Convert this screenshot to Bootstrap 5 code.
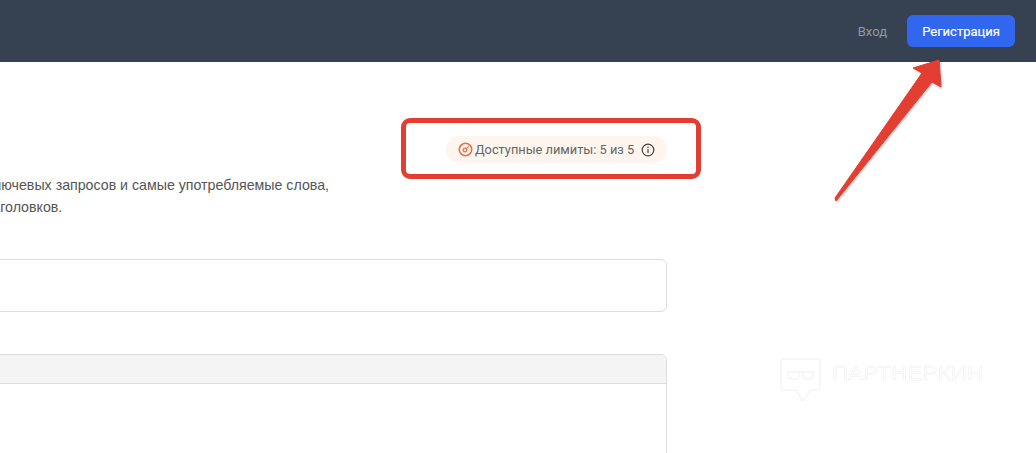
<!DOCTYPE html>
<html lang="ru">
<head>
    <meta charset="UTF-8">
    <meta name="viewport" content="width=device-width, initial-scale=1.0">
    <title>Регистрация</title>
    <link href="https://cdn.jsdelivr.net/npm/bootstrap@5.3.0/dist/css/bootstrap.min.css" rel="stylesheet">
    <style>
        html, body {
            height: 453px;
            overflow: hidden;
        }

        body {
            background: #fff;
            font-family: "Liberation Sans", Arial, sans-serif;
            position: relative;
        }

        .top-bar {
            background: #364251;
            height: 62px;
            padding-right: 21px;
        }

        .login-link {
            color: #9299a3;
            font: 13px Roboto, sans-serif;
            text-decoration: none;
        }

        .signup-btn {
            -webkit-text-stroke: .2px #fff;
            background: #3166ee;
            border: 0;
            border-radius: 6px;
            color: #fff;
            font: 13px Roboto, sans-serif;
            height: 32px;
            width: 108px;
            padding: 0;
        }

        .page-col {
            height: 391px;
            margin-left: -370px;
            overflow: hidden;
            padding-top: 74px;
            width: 1037px;
        }

        .limit-pill {
            align-items: center;
            background: #fef5ee;
            border-radius: 14px;
            color: #666;
            display: flex;
            font: 12.8px Roboto, sans-serif;
            height: 27px;
            padding: 0 12px;
            white-space: nowrap;
            width: 221px;
        }

        .pill-gauge {
            margin-right: 2px;
        }

        .pill-info {
            margin-left: 7px;
        }

        .intro-text {
            color: #555;
            font-size: 14.2px;
            line-height: 22px;
            margin: 11px 0 0;
            white-space: nowrap;
        }

        .url-box {
            border: 1px solid #dcdcdc;
            border-radius: 6px;
            height: 53px;
            margin-top: 41px;
        }

        .text-box {
            border: 1px solid #dcdcdc;
            border-radius: 6px 6px 0 0;
            height: 200px;
            margin-top: 42px;
        }

        .text-box-head {
            background: #f4f4f4;
            border-bottom: 1px solid #dcdcdc;
            border-radius: 6px 6px 0 0;
            height: 29px;
        }

        .note-frame {
            border: 5px solid #e23e32;
            border-radius: 9px;
            height: 61px;
            left: 401px;
            position: absolute;
            top: 118px;
            width: 300px;
        }

        .note-arrow {
            filter: drop-shadow(1px 1px 1px rgba(0, 0, 0, .25));
            left: 830px;
            position: absolute;
            top: 55px;
        }

        .wm-logo {
            align-items: center;
            display: flex;
            gap: 10px;
            left: 780px;
            position: absolute;
            top: 358px;
        }

        .wm-text {
            -webkit-text-stroke: .5px #eee;
            color: #fff;
            font: 20px "Liberation Sans", sans-serif;
            margin-top: -15px;
            transform: scaleX(1.13);
            transform-origin: left center;
        }
    </style>
</head>
<body>
<nav class="top-bar d-flex align-items-center justify-content-end">
    <a class="login-link me-3 pe-1" href="#">Вход</a>
    <button class="signup-btn" type="button">Регистрация</button>
</nav>

<main class="page-col">
    <div class="d-flex justify-content-end">
        <div class="limit-pill">
            <svg class="pill-gauge flex-shrink-0" width="15" height="15" viewBox="0 0 15 15" fill="none">
                <circle cx="7.5" cy="7.5" r="6.2" stroke="#e2734a" stroke-width="1.6"/>
                <circle cx="7" cy="8" r="1.8" stroke="#e2734a" stroke-width="1.3"/>
                <path d="M8.4 6.6 10.6 4.4" stroke="#e2734a" stroke-width="1.3"/>
            </svg>
            <span>Доступные лимиты: 5 из 5</span>
            <svg class="pill-info flex-shrink-0" width="14" height="14" viewBox="0 0 14 14" fill="none">
                <circle cx="7" cy="7" r="5.8" stroke="#444" stroke-width="1.2"/>
                <path d="M7 6.2V10" stroke="#444" stroke-width="1.3"/>
                <circle cx="7" cy="4.2" r=".8" fill="#444"/>
            </svg>
        </div>
    </div>
    <p class="intro-text">Сервис анализирует страницу, показывает плотность ключевых запросов и самые употребляемые слова,<br>а также проверяет наличие всяких тегов, метатегов и заголовков.</p>
    <div class="url-box"></div>
    <div class="text-box">
        <div class="text-box-head"></div>
    </div>
</main>

<div class="note-frame"></div>
<svg class="note-arrow" width="115" height="150" viewBox="830 55 115 150">
    <path d="M939 60 913 68 922 73 835 198 836 201 932 82 941 87Z" fill="#e23e32" stroke="#e23e32" stroke-linejoin="round"/>
</svg>

<div class="wm-logo">
    <svg width="42" height="46" viewBox="0 0 42 46" fill="none" stroke="#efefef">
        <path d="M3 1H38Q40 1 40 3V30Q40 32 38 32H30L23 43 16 32H3Q1 32 1 30V3Q1 1 3 1Z"/>
        <path d="M7 14H34M8 14V18Q8 21 12 21H16Q19 21 19 18V14M23 14V18Q23 21 26 21H30Q33 21 33 18V14"/>
    </svg>
    <span class="wm-text">ПАРТНЕРКИН</span>
</div>

<script src="https://cdn.jsdelivr.net/npm/bootstrap@5.3.0/dist/js/bootstrap.bundle.min.js"></script>
</body>
</html>
